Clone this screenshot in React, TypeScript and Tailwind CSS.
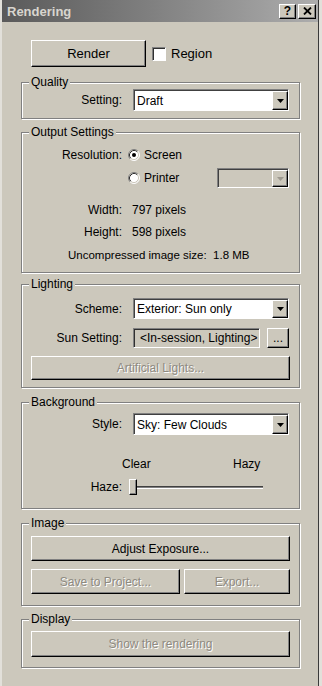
import React from 'react'

const BG = 'bg-[#ccc8bc]'

function Raised({
  children,
  disabled,
  className = '',
}: {
  children?: React.ReactNode
  disabled?: boolean
  className?: string
}) {
  return (
    <div
      className={`flex items-center justify-center border border-t-white border-l-white border-r-black border-b-black shadow-[inset_-1px_-1px_0_#808080] ${BG} ${
        disabled ? 'text-[#8e8a81] [text-shadow:1px_1px_0_#fff]' : 'text-black'
      } ${className}`}
    >
      {children}
    </div>
  )
}

function Arrow({ disabled }: { disabled?: boolean }) {
  return (
    <div className="w-[16px] flex items-center justify-center border border-t-white border-l-white border-r-black border-b-black shadow-[inset_-1px_-1px_0_#808080] bg-[#ccc8bc]">
      <svg width="7" height="4" viewBox="0 0 7 4">
        <path d="M0 0h7L3.5 4z" fill={disabled ? '#9c988e' : '#000'} />
      </svg>
    </div>
  )
}

function Select({
  value,
  disabled,
  className = '',
}: {
  value?: string
  disabled?: boolean
  className?: string
}) {
  return (
    <div
      className={`flex items-stretch border border-t-[#808080] border-l-[#808080] border-b-white border-r-white shadow-[inset_1px_1px_0_#404040] pt-[1px] pl-[1px] ${
        disabled ? BG : 'bg-white'
      } ${className}`}
    >
      <div className="flex-1 flex items-center pl-[2px]">{value}</div>
      <Arrow disabled={disabled} />
    </div>
  )
}

function Radio({ checked }: { checked?: boolean }) {
  return (
    <svg width="12" height="12" viewBox="0 0 12 12">
      <circle cx="6" cy="6" r="5" fill="#fff" />
      <path d="M2.11 9.89A5.5 5.5 0 0 1 9.89 2.11" stroke="#808080" fill="none" />
      <path d="M9.89 2.11A5.5 5.5 0 0 1 2.11 9.89" stroke="#fff" fill="none" />
      <path d="M2.82 9.18A4.5 4.5 0 0 1 9.18 2.82" stroke="#303030" fill="none" />
      <path d="M9.18 2.82A4.5 4.5 0 0 1 2.82 9.18" stroke="#ccc8bc" fill="none" />
      {checked && <circle cx="6" cy="6" r="2" fill="#000" />}
    </svg>
  )
}

function Group({
  title,
  className = '',
  children,
}: {
  title: string
  className?: string
  children: React.ReactNode
}) {
  return (
    <div
      className={`ml-[19px] w-[279px] border border-[#808080] shadow-[inset_1px_1px_0_#fff,1px_1px_0_#fff] px-[9px] flex flex-col ${className}`}
    >
      <div className={`-mt-[8px] -ml-[2px] px-[2px] w-fit h-[14px] leading-[14px] ${BG}`}>{title}</div>
      {children}
    </div>
  )
}

export default function App() {
  return (
    <div className="w-[322px] h-[686px] bg-[#e2e0da] font-['Liberation_Sans',Arial,sans-serif] text-[12px] text-black">
      <div className={`ml-[2px] w-[317px] h-full ${BG} border-r border-r-[#3a3a3a] flex flex-col`}>
        {/* title bar */}
        <div className="h-[22px] flex items-center bg-linear-to-r from-[#5a5a5a] to-[#adadad] pl-[5px] pr-[2px]">
          <span className="font-bold text-[13px] text-[#d8d5ce] leading-none">Rendering</span>
          <div className="ml-auto flex gap-[2px]">
            <Raised className="w-[17px] h-[15px] font-bold text-[12px] leading-none">?</Raised>
            <Raised className="w-[18px] h-[15px]">
              <svg width="9" height="8" viewBox="0 0 9 8">
                <path d="M1 0.5l7 7M8 0.5l-7 7" stroke="#000" strokeWidth="1.8" />
              </svg>
            </Raised>
          </div>
        </div>

        {/* render row */}
        <div className="mt-[18px] ml-[29px] flex items-center">
          <Raised className="w-[115px] h-[27px] text-[13px]">Render</Raised>
          <div className="ml-[6px] w-[14px] h-[14px] bg-white border border-t-[#808080] border-l-[#808080] border-b-white border-r-white shadow-[inset_1px_1px_0_#303030]" />
          <span className="ml-[5px] text-[13px]">Region</span>
        </div>

        <Group title="Quality" className="mt-[15px] pb-[7px]">
          <div className="flex items-center">
            <span className="w-[91px] text-right">Setting:</span>
            <Select value="Draft" className="ml-[11px] w-[156px] h-[22px]" />
          </div>
        </Group>

        <Group title="Output Settings" className="mt-[13px] pb-[8px]">
          <div className="mt-[8px] h-[16px] flex items-center">
            <span className="w-[91px] text-right">Resolution:</span>
            <span className="ml-[6px] flex"><Radio checked /></span>
            <span className="ml-[4px]">Screen</span>
          </div>
          <div className="mt-[5px] h-[20px] flex items-center">
            <span className="ml-[97px] flex"><Radio /></span>
            <span className="ml-[4px]">Printer</span>
            <Select disabled className="ml-auto mr-[1px] w-[72px] h-[20px]" />
          </div>
          <div className="mt-[14px] h-[16px] flex items-center">
            <span className="w-[91px] text-right">Width:</span>
            <span className="ml-[10px]">797 pixels</span>
          </div>
          <div className="mt-[6px] h-[16px] flex items-center">
            <span className="w-[91px] text-right">Height:</span>
            <span className="ml-[10px]">598 pixels</span>
          </div>
          <div className="mt-[8px] h-[16px] flex items-center pl-[37px] text-[11.5px]">
            Uncompressed image size:&nbsp; 1.8 MB
          </div>
        </Group>

        <Group title="Lighting" className="mt-[11px] pb-[7px]">
          <div className="mt-[7px] flex items-center">
            <span className="w-[91px] text-right">Scheme:</span>
            <Select value="Exterior: Sun only" className="ml-[11px] w-[156px] h-[21px]" />
          </div>
          <div className="mt-[9px] flex items-center">
            <span className="w-[91px] text-right">Sun Setting:</span>
            <div className="ml-[11px] w-[127px] h-[20px] flex items-center pl-[6px] border border-t-[#808080] border-l-[#808080] border-b-white border-r-white shadow-[inset_1px_1px_0_#303030] whitespace-nowrap">
              &lt;In-session, Lighting&gt;
            </div>
            <Raised className="ml-[7px] w-[22px] h-[20px] leading-none">...</Raised>
          </div>
          <Raised disabled className="mt-[8px] h-[24px]">Artificial Lights...</Raised>
        </Group>

        <Group title="Background" className="mt-[14px] pb-[13px]">
          <div className="mt-[4px] flex items-center">
            <span className="w-[91px] text-right">Style:</span>
            <Select value="Sky: Few Clouds" className="ml-[11px] w-[156px] h-[22px]" />
          </div>
          <div className="mt-[21px] h-[16px] flex items-center pl-[91px]">
            <span className="w-[111px]">Clear</span>
            <span>Hazy</span>
          </div>
          <div className="mt-[7px] h-[16px] flex items-center">
            <span className="w-[91px] text-right">Haze:</span>
            <div className="ml-[7px] relative w-[134px] h-[16px] flex items-center">
              <div className="ml-[1px] w-[133px] h-[3px] border-t border-t-[#404040] border-b border-b-white bg-[#808080]" />
              <div className="absolute left-0 top-0 w-[8px] h-[16px] border border-t-white border-l-white border-r-black border-b-black shadow-[inset_-1px_-1px_0_#808080] bg-[#ccc8bc]" />
            </div>
          </div>
        </Group>

        <Group title="Image" className="mt-[14px] pb-[11px]">
          <Raised className="mt-[6px] h-[25px]">Adjust Exposure...</Raised>
          <div className="mt-[8px] flex gap-[4px]">
            <Raised disabled className="w-[149px] h-[25px]">Save to Project...</Raised>
            <Raised disabled className="flex-1 h-[25px]">Export...</Raised>
          </div>
        </Group>

        <Group title="Display" className="mt-[13px] pb-[10px]">
          <Raised disabled className="mt-[5px] h-[26px]">Show the rendering</Raised>
        </Group>
      </div>
    </div>
  )
}
